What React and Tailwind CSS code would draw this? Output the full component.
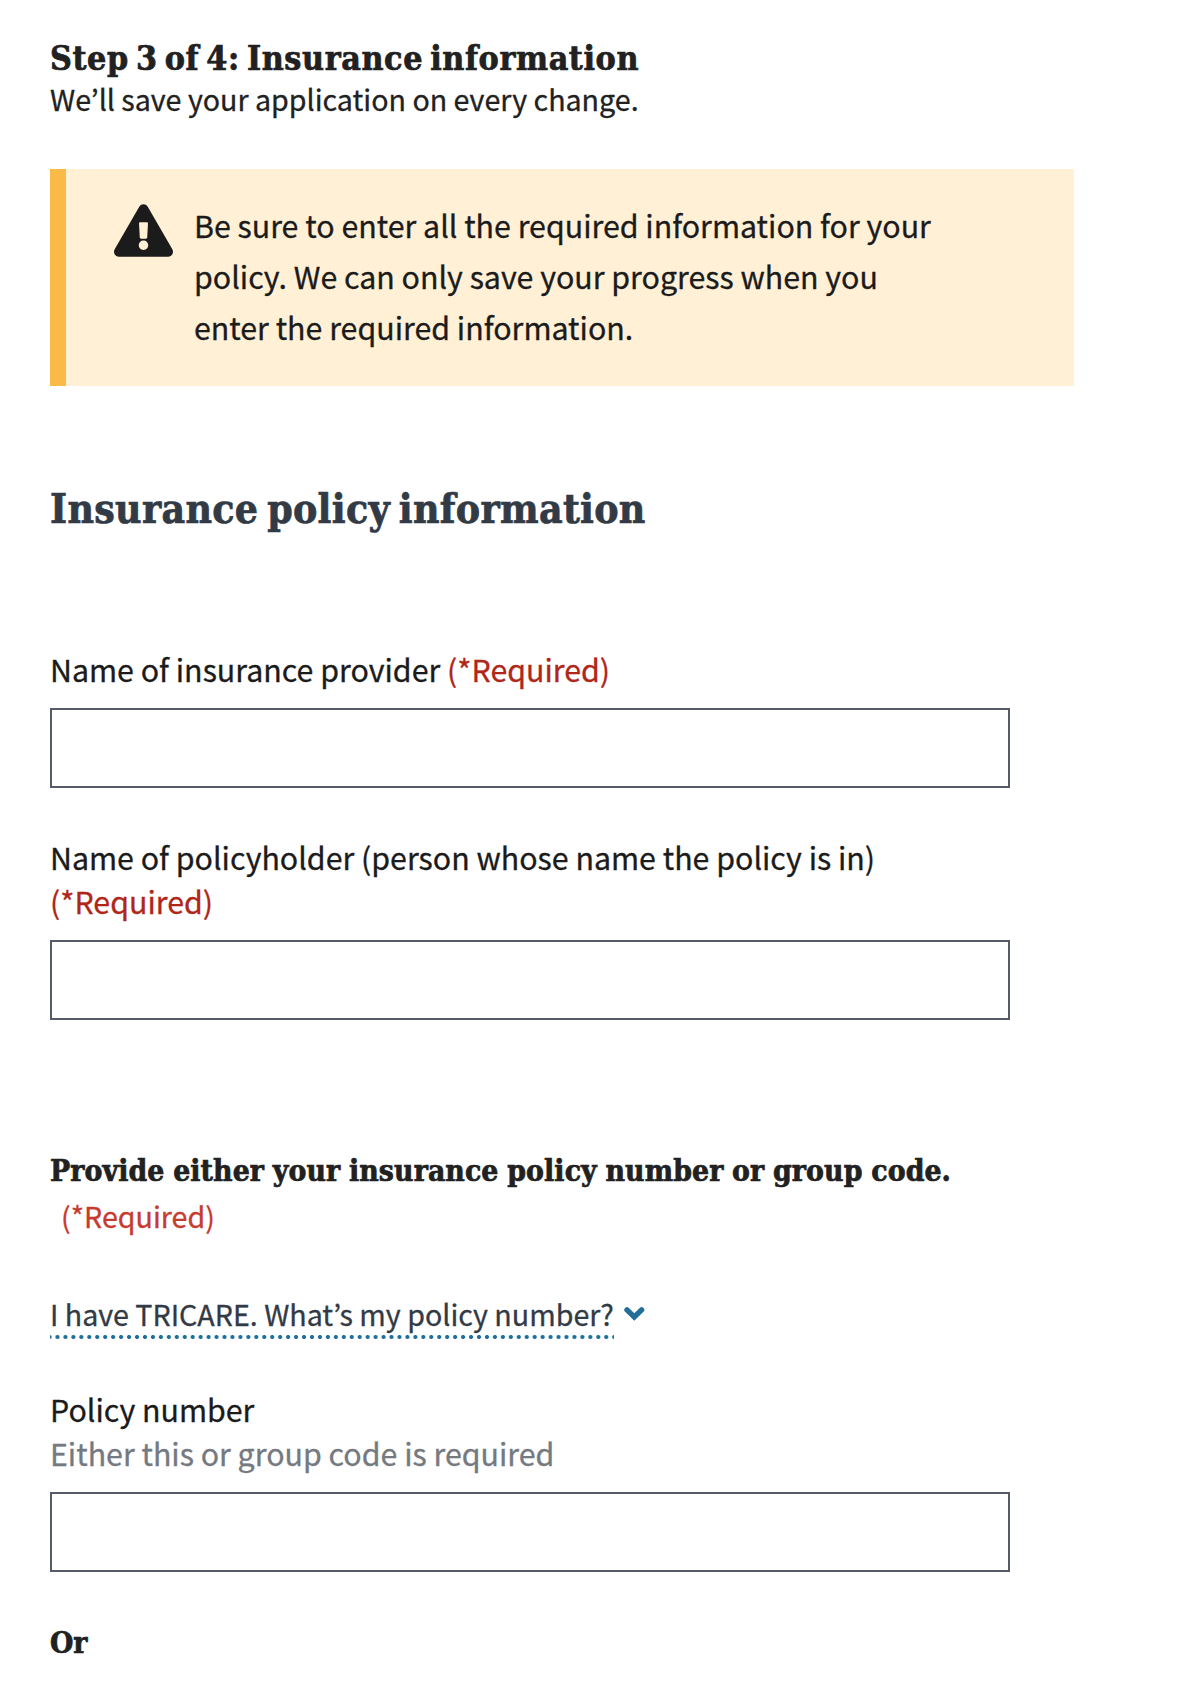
import { FaExclamationTriangle } from "react-icons/fa";

const sans = "font-['Noto_Sans_CJK_KR',sans-serif] [-webkit-text-stroke:0.3px]";
const serif = "font-['DejaVu_Serif_Condensed','DejaVu_Serif',serif] font-bold [-webkit-text-stroke:0.7px]";

function Field({ id, label, required, hint, wrap, className }) {
  return (
    <div className={`flex flex-col ${className}`}>
      <label htmlFor={id} className={`${sans} w-[960px] text-[30.35px] leading-[44px]`}>
        {label}
        {required && <span className={wrap ? "block text-[#b02618]" : "text-[#b02618]"}> (*Required)</span>}
        {hint && <span className="block text-[#757980]">{hint}</span>}
      </label>
      <input id={id} type="text" className="mt-[17px] h-20 w-[960px] border-2 border-[#565c65] bg-white px-4 text-3xl outline-none" />
    </div>
  );
}

export default function App() {
  return (
    <main className="flex min-h-[1698px] flex-col bg-white pl-[50px] pt-[38px] text-[#1b1b1b]">
      <h1 className={`${serif} text-[33.7px] leading-10 tracking-[0.6px] text-[#212121] [word-spacing:-4px]`}>Step 3 of 4: Insurance information</h1>
      <p className={`${sans} mt-px text-[28.63px] leading-10 text-[#212121]`}>We’ll save your application on every change.</p>

      <section className="mt-[50px] flex h-[217px] w-[1024px] border-l-[16px] border-[#f9ba48] bg-[#fff0d6] pl-[47px] pt-[31px]">
        <FaExclamationTriangle className="ml-px mt-1 h-[53px] w-[59px] shrink-0" />
        <p className={`${sans} ml-[21px] w-[760px] text-[30.35px] leading-[51px]`}>
          Be sure to enter all the required information for your policy. We can only save your progress when you enter the
          required information.
        </p>
      </section>

      <h2 className={`${serif} mt-[97px] text-[40.6px] leading-[52px] tracking-[0.3px] text-[#323a45] [word-spacing:-4.2px]`}>Insurance policy information</h2>

      <Field id="provider" label="Name of insurance provider" required className="mt-28" />
      <Field id="policyholder" label="Name of policyholder (person whose name the policy is in)" required wrap className="mt-[47px]" />

      <h3 className={`${serif} mt-[129px] text-[29.8px] leading-[44px] tracking-[0.1px] text-[#212121] [word-spacing:-0.7px]`}>
        Provide either your insurance policy number or group code.
      </h3>
      <span className={`${sans} ml-[11px] mt-px text-[28.63px] leading-[44px] text-[#c63b30]`}>(*Required)</span>

      <button type="button" className="mt-[54px] flex h-[47px] items-start text-left">
        <span className={`${sans} h-[47px] w-[564px] whitespace-nowrap bg-[radial-gradient(circle,#1f6f9c_1.6px,transparent_2.4px)] bg-[length:7.964px_4px] bg-[position:3.5px_100%] bg-repeat-x text-[28.63px] leading-[44px] text-[#323a45]`}>
          I have TRICARE. What’s my policy number?
        </span>
        <svg className="ml-2.5 mt-[15px] h-3.5 w-[21px]" viewBox="0 0 21 14" fill="none" stroke="#236e98" strokeWidth="5.4" strokeLinecap="round">
          <path d="M3 2.9 10.3 9.9 17.6 2.9" />
        </svg>
      </button>

      <Field id="policy-number" label="Policy number" hint="Either this or group code is required" className="mt-12" />

      <h3 className={`${serif} mt-[49px] text-[29.8px] leading-[44px] text-[#212121]`}>Or</h3>
    </main>
  );
}
